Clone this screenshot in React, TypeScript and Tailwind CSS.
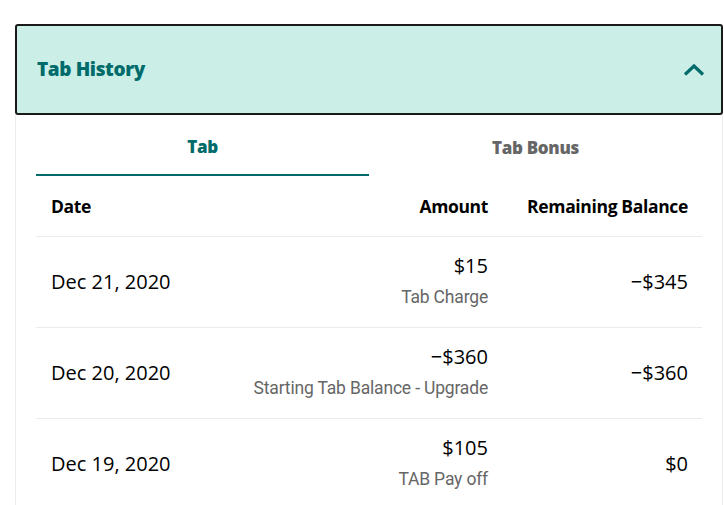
const rows = [
  { date: "Dec 21, 2020", amount: "$15", note: "Tab Charge", balance: "−$345" },
  { date: "Dec 20, 2020", amount: "−$360", note: "Starting Tab Balance - Upgrade", balance: "−$360" },
  { date: "Dec 19, 2020", amount: "$105", note: "TAB Pay off", balance: "$0" },
];

export default function App() {
  return (
    <main className="min-h-screen bg-white pt-6 font-['Open_Sans',sans-serif] text-black">
      <div className="ml-[15px] w-[708px]">
        <header className="flex h-[91px] items-center justify-between rounded-[3px] border-2 border-[#1a1a1a] bg-[#cbefe7] pl-5 pr-4">
          <h2 className="text-[19px] font-extrabold tracking-[-0.02em] text-[#006b6b]">Tab History</h2>
          <svg width="22" height="14" viewBox="0 0 22 14" fill="none">
            <path d="M2 11.5 L11 3 L20 11.5" stroke="#006b6b" strokeWidth="3.2" />
          </svg>
        </header>

        <section className="border-x border-[#ececec] px-5">
          <div className="flex">
            <button className="h-[61px] flex-1 border-b-2 border-[#006b6b] pt-1 text-[17px] font-extrabold tracking-[-0.02em] text-[#006b6b]">
              Tab
            </button>
            <button className="h-[61px] flex-1 pt-1 text-[17px] font-extrabold tracking-[-0.02em] text-[#666]">
              Tab Bonus
            </button>
          </div>

          <table className="w-full border-collapse">
            <thead>
              <tr className="h-[60px] border-b border-[#ebebeb] text-[17.5px] font-extrabold tracking-[-0.02em]">
                <th className="pl-[15px] text-left">Date</th>
                <th className="pr-[14px] text-right">Amount</th>
                <th className="w-[200px] pr-[14px] text-right">Remaining Balance</th>
              </tr>
            </thead>
            <tbody>
              {rows.map((row) => (
                <tr key={row.date} className="h-[91px] border-b border-[#ebebeb] text-[20px]">
                  <td className="pl-[15px]">{row.date}</td>
                  <td className="pr-[14px] text-right">
                    <div className="leading-6">{row.amount}</div>
                    <div className="mt-[7px] font-['Roboto',sans-serif] text-[17.5px] leading-6 tracking-[-0.01em] text-[#666]">
                      {row.note}
                    </div>
                  </td>
                  <td className="pr-[14px] text-right">{row.balance}</td>
                </tr>
              ))}
            </tbody>
          </table>
        </section>
      </div>
    </main>
  );
}
